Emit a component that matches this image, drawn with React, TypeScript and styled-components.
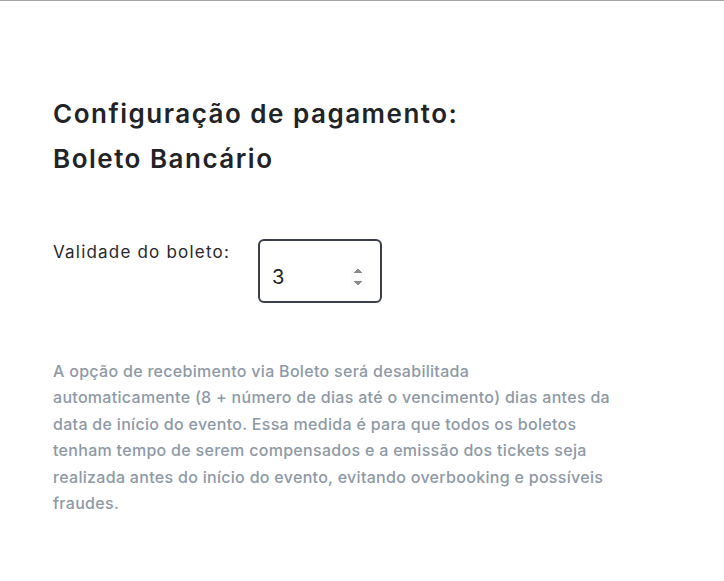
import React, { useState } from 'react';
import styled, { createGlobalStyle } from 'styled-components';

const GlobalStyle = createGlobalStyle`
  html, body {
    margin: 0;
    padding: 0;
    background: #ffffff;
    font-family: 'Inter', 'Noto Sans', sans-serif;
  }
`;

const Page = styled.div`
  border-top: 1px solid #a3a3a3;
  min-height: 580px;
  padding: 90px 53px 0;
  box-sizing: border-box;
`;

const Title = styled.h1`
  margin: 0;
  font-size: 26px;
  font-weight: 600;
  letter-spacing: 1.5px;
  line-height: 45px;
  color: #222326;
`;

const FieldRow = styled.div`
  display: flex;
  align-items: flex-start;
  gap: 28px;
  margin-top: 58px;
`;

const Label = styled.label`
  font-size: 17px;
  letter-spacing: 1.2px;
  color: #27282b;
  line-height: 20px;
  margin-top: 3px;
`;

const NumberInput = styled.input`
  width: 124px;
  height: 64px;
  box-sizing: border-box;
  border: 2px solid #3b3f4d;
  border-radius: 6px;
  padding: 12px 14px 0 12px;
  font-family: inherit;
  font-size: 20px;
  color: #222326;
  outline: none;
  background: #fff;
`;

const Notice = styled.p`
  margin: 55px 0 0;
  font-size: 16px;
  font-weight: 500;
  letter-spacing: 0.3px;
  line-height: 26.4px;
  color: #8e99a6;
  white-space: nowrap;
`;

const NOTICE_LINES = [
  'A opção de recebimento via Boleto será desabilitada',
  'automaticamente (8 + número de dias até o vencimento) dias antes da',
  'data de início do evento. Essa medida é para que todos os boletos',
  'tenham tempo de serem compensados e a emissão dos tickets seja',
  'realizada antes do início do evento, evitando overbooking e possíveis',
  'fraudes.',
];

export default function App() {
  const [days, setDays] = useState('3');

  return (
    <>
      <GlobalStyle />
      <Page>
        <Title>
          Configuração de pagamento:
          <br />
          Boleto Bancário
        </Title>
        <FieldRow>
          <Label htmlFor="validade">Validade do boleto:</Label>
          <NumberInput
            id="validade"
            type="number"
            autoFocus
            value={days}
            onChange={(e) => setDays(e.target.value)}
          />
        </FieldRow>
        <Notice>
          {NOTICE_LINES.map((line, i) => (
            <React.Fragment key={i}>
              {line}
              {i < NOTICE_LINES.length - 1 && <br />}
            </React.Fragment>
          ))}
        </Notice>
      </Page>
    </>
  );
}
